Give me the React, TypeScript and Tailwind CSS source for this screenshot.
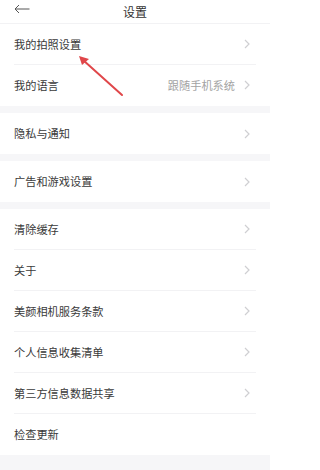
import React from 'react';

type Row = { label: string; value?: string; chevron?: boolean };

const groups: Row[][] = [
  [
    { label: '我的拍照设置', chevron: true },
    { label: '我的语言', value: '跟随手机系统', chevron: true },
  ],
  [{ label: '隐私与通知', chevron: true }],
  [{ label: '广告和游戏设置', chevron: true }],
  [
    { label: '清除缓存', chevron: true },
    { label: '关于', chevron: true },
    { label: '美颜相机服务条款', chevron: true },
    { label: '个人信息收集清单', chevron: true },
    { label: '第三方信息数据共享', chevron: true },
    { label: '检查更新' },
  ],
];

function Chevron() {
  return (
    <svg width="6" height="10" viewBox="0 0 6 10" className="ml-[9px]">
      <path d="M1 1 L5 5 L1 9" fill="none" stroke="#cfcfd2" strokeWidth="1.2" />
    </svg>
  );
}

function SettingRow({ row, last }: { row: Row; last: boolean }) {
  return (
    <div className="px-[14px]">
      <div
        className={`h-[41px] flex items-center justify-between ${
          last ? '' : 'border-b border-[#f2f2f4]'
        }`}
      >
        <span className="text-[11.2px] text-[#3a3a3a]">{row.label}</span>
        <div className="flex items-center pr-[6px]">
          {row.value && <span className="text-[11.2px] text-[#a3a3a3]">{row.value}</span>}
          {row.chevron && <Chevron />}
        </div>
      </div>
    </div>
  );
}

export default function App() {
  return (
    <div
      className="relative w-[270px] h-[470px] bg-[#f6f6f8] overflow-hidden"
      style={{ fontFamily: '"Noto Sans CJK SC", "Noto Sans", sans-serif' }}
    >
      <div className="h-[24px] bg-white border-b border-[#f2f2f4] flex items-center relative">
        <svg width="16" height="10" viewBox="0 0 16 10" className="absolute left-[14px] top-[4px]">
          <path d="M15.5 5 H1 M5 1 L1 5 L5 9" fill="none" stroke="#555" strokeWidth="1" />
        </svg>
        <span className="mx-auto text-[12px] text-[#333] leading-none">设置</span>
      </div>

      <div className="flex flex-col gap-[7px]">
        {groups.map((g, gi) => (
          <div key={gi} className="bg-white">
            {g.map((r, ri) => (
              <SettingRow key={r.label} row={r} last={ri === g.length - 1} />
            ))}
          </div>
        ))}
      </div>

      {/* annotation arrow */}
      <svg className="absolute left-0 top-0 pointer-events-none" width="270" height="470">
        <line x1="122" y1="95" x2="83" y2="60" stroke="#e0474a" strokeWidth="2" strokeLinecap="round" />
        <path d="M79 56 L89 59 L82 65 Z" fill="#e0474a" />
      </svg>
    </div>
  );
}
